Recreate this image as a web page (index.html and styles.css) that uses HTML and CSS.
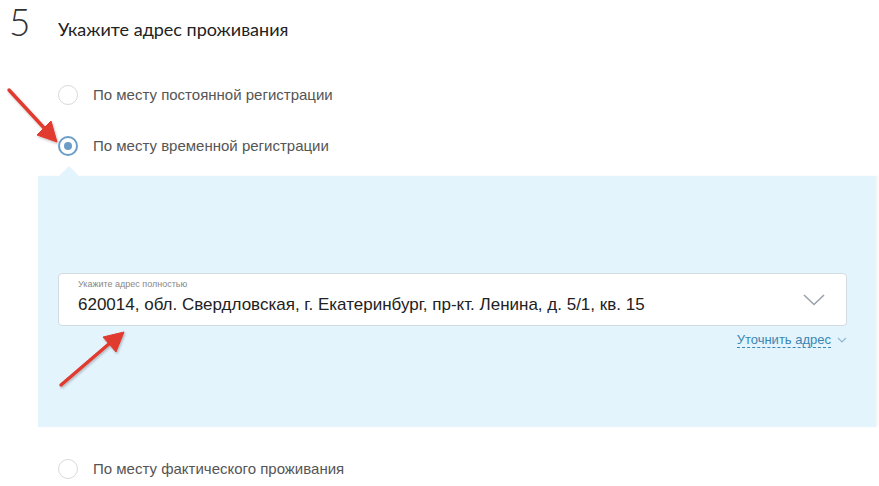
FILE: index.html
```html
<!DOCTYPE html>
<html lang="ru">
<head>
  <meta charset="UTF-8" />
  <meta name="viewport" content="width=device-width, initial-scale=1.0" />
  <title>Адрес проживания</title>
  <link rel="stylesheet" href="styles.css">
</head>
<body>

  <div class="step">
    <div class="step-head">
      <span class="step-num">5</span>
      <span class="step-title">Укажите адрес проживания</span>
    </div>

    <label class="radio-row first">
      <span class="radio"></span>
      <span class="radio-text">По месту постоянной регистрации</span>
    </label>

    <label class="radio-row">
      <span class="radio checked"></span>
      <span class="radio-text">По месту временной регистрации</span>
    </label>

    <div class="panel">
      <div class="field">
        <div class="field-label">Укажите адрес полностью</div>
        <div class="field-value">620014, обл. Свердловская, г. Екатеринбург, пр-кт. Ленина, д. 5/1, кв. 15</div>
        <svg class="field-arrow" width="22" height="12" viewBox="0 0 22 12">
          <path d="M1 1 L11 10.5 L21 1" fill="none" stroke="#9aa3ab" stroke-width="1.6"/>
        </svg>
      </div>
      <div class="refine">
        <a class="refine-link">Уточнить адрес</a>
        <svg width="10" height="6" viewBox="0 0 10 6">
          <path d="M1 1 L5 5 L9 1" fill="none" stroke="#8fb6d2" stroke-width="1.1"/>
        </svg>
      </div>
    </div>

    <label class="radio-row last">
      <span class="radio"></span>
      <span class="radio-text">По месту фактического проживания</span>
    </label>

    <!-- annotation arrows drawn over the form -->
    <svg class="marks" width="879" height="486" viewBox="0 0 879 486">
      <defs>
        <filter id="sh" x="-20%" y="-20%" width="140%" height="140%">
          <feDropShadow dx="1" dy="1.5" stdDeviation="1" flood-color="#000" flood-opacity="0.25"/>
        </filter>
      </defs>
      <g filter="url(#sh)" fill="#e03a2e" stroke="#e03a2e">
        <line x1="9" y1="90" x2="46" y2="130" stroke-width="3.4" stroke-linecap="round"/>
        <polygon points="57,142 37,135 51,121" stroke-width="1"/>
        <line x1="61" y1="385" x2="110" y2="343" stroke-width="3.4" stroke-linecap="round"/>
        <polygon points="124,332 116,352 103,337" stroke-width="1"/>
      </g>
    </svg>
  </div>

</body>
</html>
```

FILE: styles.css
```css
body {
  margin: 0;
  background: #fff;
  font-family: Arial, "Liberation Sans", sans-serif;
  color: #222;
}

.step {
  position: relative;
  width: 879px;
  height: 486px;
  overflow: hidden;
}

.step-head {
  display: flex;
  align-items: baseline;
  padding: 3px 0 0 9px;
  height: 49px;
  line-height: 1;
}

.step-num {
  font-family: Lato, sans-serif;
  font-weight: 300;
  font-size: 37px;
  line-height: 37px;
  color: #333;
  width: 49px;
}

.step-title {
  font-family: Lato, sans-serif;
  font-size: 18px;
  color: #222;
}

.radio-row {
  display: flex;
  align-items: center;
  height: 51px;
  padding-left: 58px;
}

.radio-row.first {
  margin-top: 17px;
}

.radio-row.last {
  margin-top: 16px;
}

.radio {
  box-sizing: border-box;
  width: 20px;
  height: 20px;
  border: 1px solid #d9d9d9;
  border-radius: 50%;
  margin-right: 15px;
  position: relative;
}

.radio.checked {
  border: 2px solid #6a9ec8;
}

.radio.checked::after {
  content: "";
  position: absolute;
  left: 4px;
  top: 4px;
  width: 8px;
  height: 8px;
  border-radius: 50%;
  background: #6a9ec8;
}

.radio-text {
  font-size: 15px;
  color: #555;
}

.panel {
  position: relative;
  margin: 5px 3px 0 38px;
  height: 251px;
  background: #e3f4fd;
  box-shadow: 2px 0 2px rgba(0,0,0,0.04);
  box-sizing: border-box;
  padding: 97px 29px 0 20px;
}

.panel::before {
  content: "";
  position: absolute;
  left: 21px;
  top: -10px;
  border-left: 10px solid transparent;
  border-right: 10px solid transparent;
  border-bottom: 10px solid #e3f4fd;
}

.field {
  position: relative;
  height: 53px;
  box-sizing: border-box;
  background: #fff;
  border: 1px solid #d3dbe2;
  border-radius: 4px;
  padding: 5px 20px 0 19px;
}

.field-label {
  font-size: 9px;
  color: #888;
  line-height: 11px;
}

.field-value {
  font-size: 17px;
  line-height: 22px;
  margin-top: 4px;
  color: #222;
}

.field-arrow {
  position: absolute;
  right: 21px;
  top: 20px;
}

.refine {
  display: flex;
  align-items: center;
  justify-content: flex-end;
  gap: 6px;
  margin-top: 6px;
}

.refine-link {
  font-size: 13px;
  color: #3a86b3;
  border-bottom: 1px dashed #3a86b3;
  line-height: 15px;
}

.marks {
  position: absolute;
  left: 0;
  top: 0;
  pointer-events: none;
}
```
